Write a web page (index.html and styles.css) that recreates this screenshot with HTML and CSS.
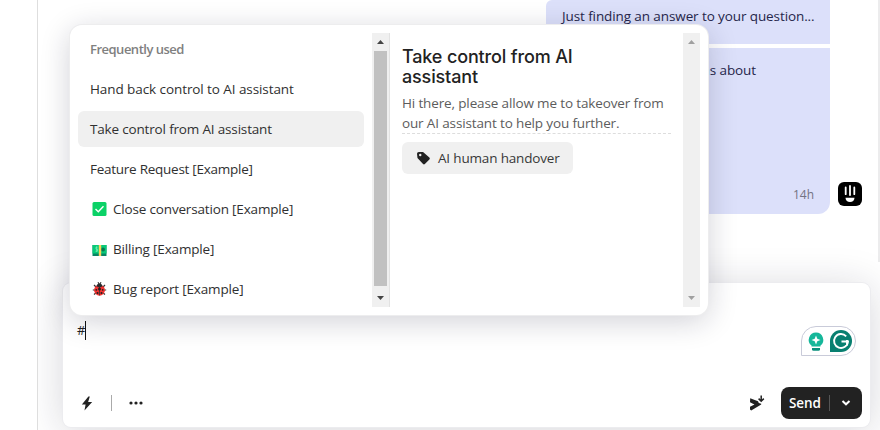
FILE: index.html
```html
<!DOCTYPE html>
<html lang="en">
<head>
<meta charset="utf-8">
<title>Inbox</title>
<link rel="stylesheet" href="styles.css">
</head>
<body>
<main class="inbox">
  <section class="thread">
    <div class="messages">
      <div class="bubble bubble-first">Just finding an answer to your question...</div>
      <div class="message-row">
        <div class="bubble bubble-last">
          <p class="bubble-text">Do you have any questions about</p>
          <span class="time">14h</span>
        </div>
        <svg class="avatar" viewBox="0 0 24 24"><rect width="24" height="24" rx="6"/><path d="M7.700 5.500v6.700M12 4v9M16.300 5.500v6.700" stroke="#fff" stroke-width="1.800" stroke-linecap="round"/><path d="M7.500 15.800h9c0 2.800-2 4.200-4.500 4.200s-4.500-1.400-4.500-4.200z" fill="#fff"/></svg>
      </div>
    </div>
    <span class="thread-edge"></span>
  </section>
  <section class="composer">
    <div class="editor"><span class="typed">#</span><span class="caret"></span></div>
    <div class="toolbar">
      <svg class="bolt" viewBox="0 0 12 16"><path d="M7.500.5.500 9h4L3.300 15.500 11.500 6.500H7.200L9 .5z"/></svg>
      <span class="divider"></span>
      <svg class="dots" viewBox="0 0 14 4"><circle cx="2" cy="2" r="1.600"/><circle cx="7" cy="2" r="1.600"/><circle cx="12" cy="2" r="1.600"/></svg>
      <svg class="snooze" viewBox="0 0 16 16"><path d="M1.200 3.200 9 6.200 9.800 8 12.200 8.800V9.600L2.200 15.400 1 14.600V11.800L5.500 9.400 1 7.200z"/><path d="M12.200.5v5.500M9.600 3.600 12.200 6.200l2.600-2.600" fill="none" stroke="#222" stroke-width="1.500"/></svg>
      <div class="send"><span class="send-label">Send</span><span class="send-divider"></span><svg class="chevron" viewBox="0 0 10 6"><path d="M1.500 1 5 4.300 8.500 1" fill="none" stroke="#fff" stroke-width="2"/></svg></div>
    </div>
  </section>
  <svg class="writing-tools" viewBox="0 0 56 31">
    <path d="M15 .5h25a14.500 14.500 0 0 1 0 29H.5V15A14.500 14.500 0 0 1 15 .5z" fill="#fff" stroke="#c9cbd9"/>
    <path d="M15 6.500a7.300 7.300 0 0 0-4.500 13V21h9v-1.500A7.300 7.300 0 0 0 15 6.500z" fill="#15b79a"/>
    <path d="M11 22h8v1.200q0 1.500-1.500 1.500h-5q-1.500 0-1.500-1.500z" fill="#078f7b"/>
    <path d="M10 21h10" stroke="#fff"/>
    <path d="m15 9.500 1.300 3.200 3.200 1.300-3.200 1.300L15 18.500l-1.300-3.200-3.200-1.300 3.200-1.300z" fill="#fff"/>
    <path d="M40 4a11 11 0 1 1 0 22H29V15A11 11 0 0 1 40 4z" fill="#087f70"/>
    <path d="M45.200 10.300A7 7 0 1 0 47 15.500H40.500M46 14v5.800" fill="none" stroke="#fff" stroke-width="1.900"/>
  </svg>
  <section class="picker">
    <div class="list">
      <div class="list-heading">Frequently used</div>
      <div class="item"><span class="hand">Hand back control to AI assistant</span></div>
      <div class="item selected"><span class="take">Take control from AI assistant</span></div>
      <div class="item"><span class="feature">Feature Request [Example]</span></div>
      <div class="item"><svg class="emoji" viewBox="0 0 14 14"><rect width="14" height="14" rx="1.500" fill="#0bd267"/><path d="m3 7 2.800 2.800L11 4.200" fill="none" stroke="#fff" stroke-width="1.400"/></svg><span class="close">Close conversation [Example]</span></div>
      <div class="item"><svg class="emoji" viewBox="0 0 14 14"><path d="M0 3h14v11H0z" fill="#078564"/><path d="M0 3h14v8.500H0z" fill="#08ca78"/><circle cx="10.500" cy="7.500" r="2" fill="#087650"/><path d="M5 5.200H3.500v2H5v2H3M4.200 4.400V10" fill="none" stroke="#75efb4" stroke-width=".8"/><path d="M6.300 3h2.400v11H6.300z" fill="#ffd25c"/></svg><span class="billing">Billing [Example]</span></div>
      <div class="item"><svg class="emoji" viewBox="0 0 14 14"><path d="M1.500 3 3.500 5M12.500 3 10.500 5M.3 8H3m10.700 0H11M1.500 12.500 4 10.500m8.500 2L10 10.500M5.500.3 6.500 2M8.500.3 7.500 2" stroke="#333" stroke-width="1.200"/><ellipse cx="7" cy="8.200" rx="5.400" ry="5.500" fill="#f03230"/><path d="M3.800 4.200a3.300 3.300 0 0 1 6.400 0L7 5.500z" fill="#292b2d"/><path d="M7 4v9.400" stroke="#333" stroke-width=".8"/><g fill="#222"><circle cx="7" cy="7" r="1.500"/><circle cx="3.800" cy="7.800" r=".9"/><circle cx="10.200" cy="7.800" r=".9"/><circle cx="5" cy="11" r="1"/><circle cx="9" cy="11" r="1"/></g></svg><span class="bug">Bug report [Example]</span></div>
    </div>
    <div class="scrollbar"><svg class="arrow" viewBox="0 0 7 4"><path d="M0 4 3.500 0 7 4z"/></svg><span class="thumb"></span><svg class="arrow" viewBox="0 0 7 4"><path d="M0 0h7L3.500 4z"/></svg></div>
    <div class="preview">
      <h2>Take control from AI<br>assistant</h2>
      <p class="body"><span class="line1">Hi there, please allow me to takeover from</span><br><span class="line2">our AI assistant to help you further.</span></p>
      <div class="tag"><svg class="tag-icon" viewBox="0 0 14 14"><path fill-rule="evenodd" d="M2 0h4.500L13.300 6q1 1 0 2l-4.800 5q-1 1-2 0L.5 6.500 0 2Q0 0 2 0zm1.500 2a1.300 1.300 0 1 0 0 2.600 1.300 1.300 0 0 0 0-2.600z"/></svg><span class="handover">AI human handover</span></div>
    </div>
    <div class="scrollbar disabled"><svg class="arrow" viewBox="0 0 7 4"><path d="M0 4 3.500 0 7 4z"/></svg><svg class="arrow" viewBox="0 0 7 4"><path d="M0 0h7L3.500 4z"/></svg></div>
  </section>
</main>
</body>
</html>
```
FILE: styles.css
```css
* { box-sizing: border-box; }
body { margin: 0; background: #fff; color: #222; font: 13.5px/20px "Open Sans", "Noto Sans", sans-serif; }
p, h2 { margin: 0; }
svg { display: block; flex: none; fill: #222; }
.inbox { width: 843px; height: 430px; overflow: hidden; margin-left: 37px; border-left: 1px solid #dedede; }
.thread { height: 283px; display: flex; justify-content: flex-end; }
.messages { display: flex; flex-direction: column; width: 316px; gap: 4px; }
.thread-edge { width: 2px; height: 262px; margin-left: 16px; background: #ececed; }
.bubble { width: 284px; background: #dce0fa; color: #26264a; white-space: nowrap; }
.bubble-first { height: 44px; padding: 6px 16px; border-radius: 6px 0 0 0; letter-spacing: -.1px; }
.message-row { display: flex; align-items: flex-end; justify-content: space-between; height: 166px; }
.bubble-last { height: 166px; display: flex; flex-direction: column; justify-content: space-between; padding: 12px 16px 9px; border-radius: 0 0 12px 12px; }
.bubble-text { align-self: flex-end; padding-right: 58px; letter-spacing: -.1px; }
.time { align-self: flex-end; color: #737382; font-size: 12px; }
.avatar { width: 24px; height: 24px; margin-bottom: 8px; fill: #000; }
.composer { position: relative; width: 807px; height: 144px; margin-left: 25px; border-radius: 8px; background: #fff; box-shadow: 0 0 0 1px #ececef, 0 4px 40px rgba(20, 20, 50, .18); display: flex; flex-direction: column; justify-content: space-between; padding: 37px 8px 8px 14px; }
.editor { display: flex; align-items: center; height: 20px; }
.typed { width: 8px; font-size: 13px; }
.caret { width: 1px; height: 19px; background: #111; }
.toolbar { display: flex; align-items: center; height: 32px; }
.bolt { width: 12px; height: 15px; margin-left: 4px; }
.divider { width: 1px; height: 16px; background: #aaa; margin: 0 17px 0 18px; }
.dots { width: 14px; height: 4px; }
.snooze { width: 16px; height: 16px; margin: 0 16px 0 auto; }
.send { width: 81px; height: 32px; border-radius: 8px; background: #222; color: #fff; display: flex; align-items: center; padding-left: 8px; font-weight: 600; }
.send-label { width: 40px; letter-spacing: -.1px; }
.send-divider { width: 1px; height: 16px; background: #555; }
.chevron { width: 10px; height: 6px; margin-left: 11px; }
.writing-tools { position: absolute; left: 801px; top: 326px; width: 56px; height: 31px; }
.picker { position: absolute; left: 70px; top: 25px; width: 638px; height: 290px; border-radius: 12px; background: #fff; box-shadow: 0 0 0 1px #ededee, 0 6px 30px rgba(20, 20, 50, .2); display: flex; padding: 8px; }
.list { width: 294px; padding-right: 8px; white-space: nowrap; color: #303030; }
.list-heading { height: 34px; padding: 6px 12px; margin-bottom: 4px; color: #808080; font-size: 13px; font-weight: 600; letter-spacing: -.5px; }
.item { display: flex; align-items: center; height: 36px; margin-bottom: 4px; padding: 0 12px; border-radius: 6px; letter-spacing: -.17px; }
.hand { letter-spacing: -.08px; }
.feature { letter-spacing: -.26px; }
.selected { background: #f0f0f0; }
.emoji { width: 15px; height: 14px; margin-left: 2px; margin-right: 6px; }
.scrollbar { width: 18px; height: 274px; background: #f0f0f0; border-right: 1px solid #e2e2e2; display: flex; flex-direction: column; align-items: center; justify-content: space-between; padding: 7px 0; }
.arrow { width: 7px; height: 4px; fill: #444; }
.thumb { width: 13px; height: 235px; background: #c1c1c1; margin-top: 7px; margin-bottom: auto; }
.preview { width: 293px; padding: 14px 12px; }
.preview h2 { font: 500 18px/20px Inter, sans-serif; letter-spacing: -.15px; white-space: nowrap; }
.preview .body { height: 41px; margin: 6px 0 8px; color: #5c5c5c; border-bottom: 1px dashed #ddd; white-space: nowrap; letter-spacing: -.14px; }
.tag { display: flex; align-items: center; width: 171px; height: 32px; border-radius: 6px; background: #f0f0f0; color: #383838; padding-left: 15px; white-space: nowrap; letter-spacing: -.17px; }
.tag-icon { width: 13px; height: 13px; margin-right: 8px; }
.disabled { width: 17px; border: 0; }
.disabled .arrow { fill: #a0a0a0; }
```
